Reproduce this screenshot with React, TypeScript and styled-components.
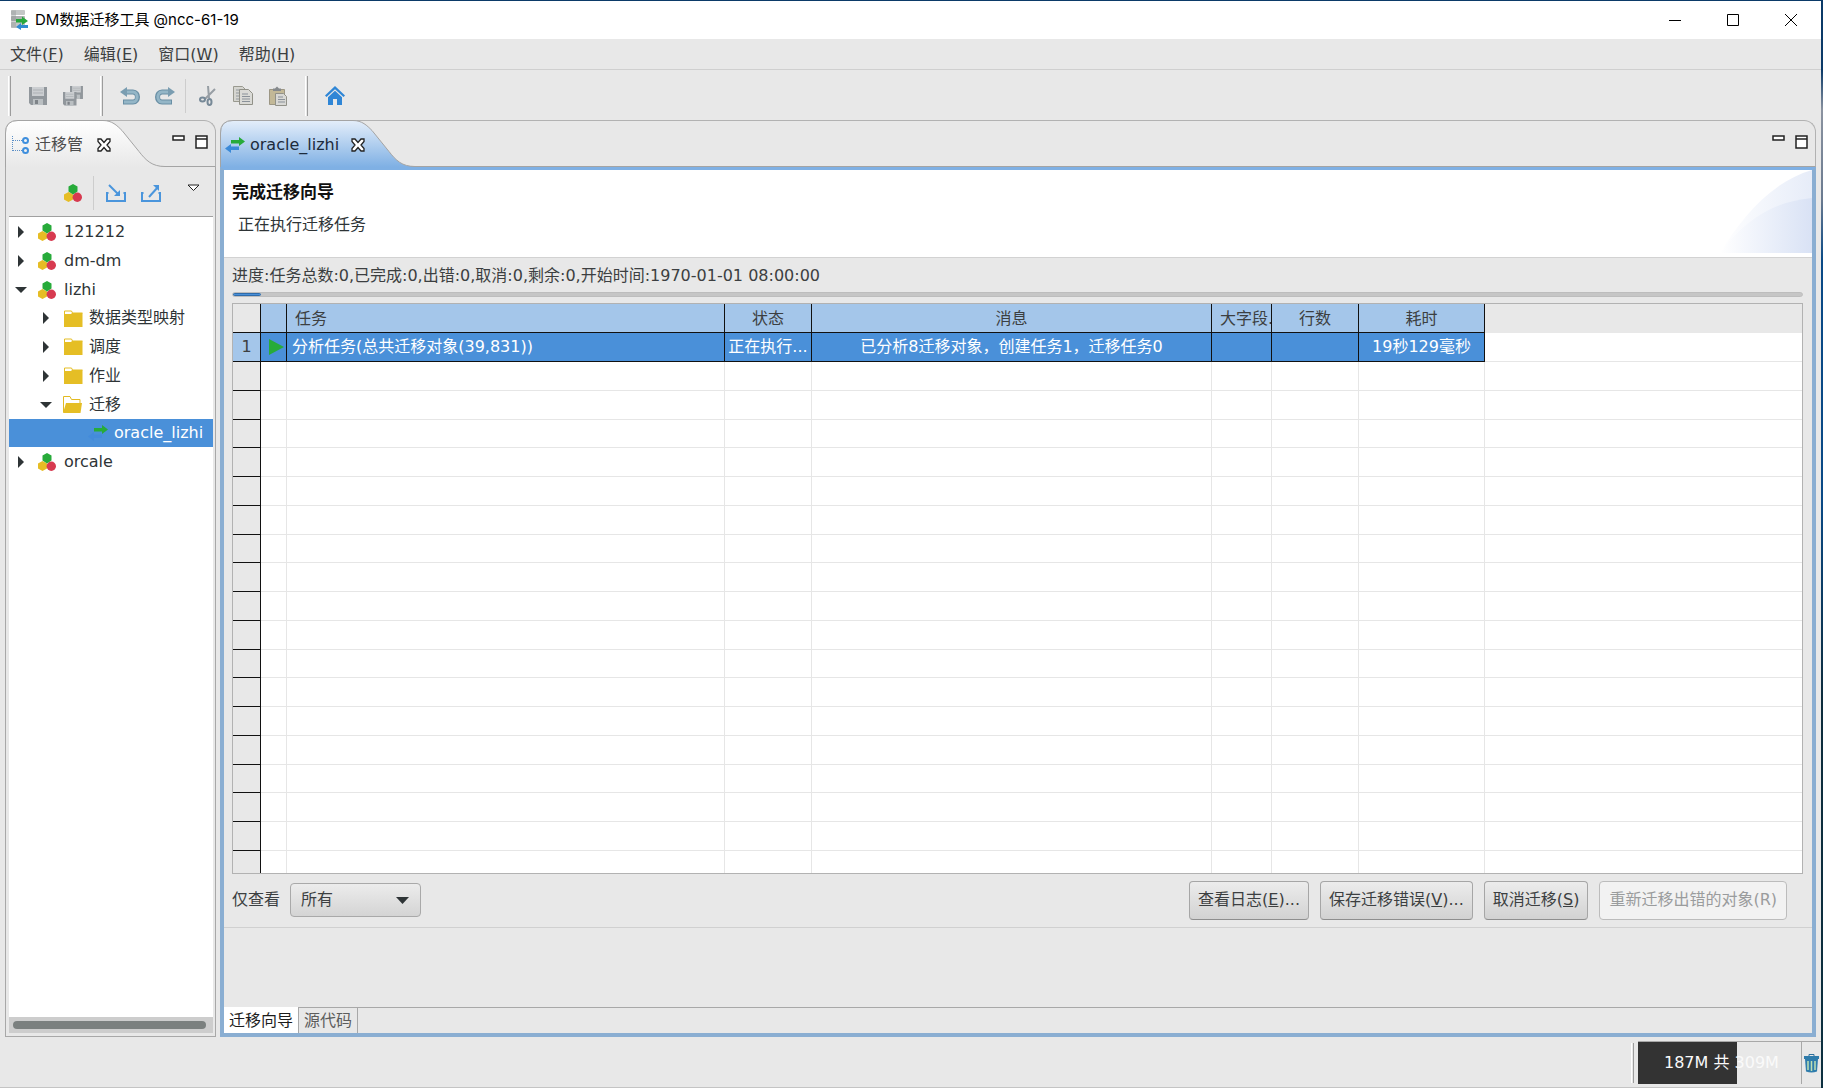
import React from 'react';
import styled, { createGlobalStyle, css } from 'styled-components';

const c = {
  face: '#e8e8e8',
  line: '#b2b2b2',
  text: '#3c3f41',
  accent: '#4a90d9',
  accentSoft: '#a4c6ea',
  frame: '#8aaed2',
  tabBlue: '#7fb0e4',
};

const uiFont = '"DejaVu Sans", "Noto Sans CJK SC", sans-serif';

const GlobalStyle = createGlobalStyle`
  * { box-sizing: border-box; }
  body { margin: 0; background: ${c.face}; }
  button, select { font: inherit; color: inherit; }
  ul { list-style: none; margin: 0; padding: 0; }
`;

/* ---------- window frame ---------- */

const Desktop = styled.div`
  display: flex;
  height: 100vh;
  padding: 1px 2px 0 0;
  background: linear-gradient(#0b3a68 0, #0b3a68 70px, #8b93a0 110px, #6a7a90 200px, #0a4a86 260px, #0a4a86 500px, #0d2c3c 700px, #0d3040 100%);
`;

const Window = styled.div`
  display: flex;
  flex-direction: column;
  flex: 1;
  min-width: 0;
  background: ${c.face};
  border-bottom: 1px solid #c4c4c4;
  font: 16px/24px ${uiFont};
  color: ${c.text};
`;

const TitleBar = styled.header`
  display: flex;
  align-items: center;
  height: 38px;
  padding-left: 10px;
  background: #fff;
  color: #000;
`;

const Title = styled.h1`
  flex: 1;
  margin: 0 0 0 7px;
  font: 400 15px/20px Inter, "Noto Sans CJK SC", sans-serif;
`;

const CaptionButton = styled.button`
  display: grid;
  place-items: center;
  width: 58px;
  height: 38px;
  padding: 0;
  border: 0;
  background: none;
`;

const CaptionGroup = styled.div`
  display: flex;
  padding-right: 1px;
`;

const MenuBar = styled.nav`
  display: flex;
  align-items: center;
  gap: 20px;
  height: 31px;
  padding: 2px 10px 0;
  border-bottom: 1px solid #cfcfcf;
`;

const MenuItem = styled.button`
  padding: 0;
  border: 0;
  background: none;
`;

const ToolBar = styled.div`
  display: flex;
  align-items: center;
  height: 50px;
  padding-top: 1px;
`;

const Handle = styled.span`
  width: 3px;
  height: 40px;
  margin: 0 9px 0 10px;
  border: solid #fff;
  border-width: 0 0 0 1px;
  border-right: 1px solid #9c9c9c;
  &:first-child { margin-left: 8px; }
`;

const Divider = styled.span`
  width: 1px;
  height: 34px;
  margin: 0 4px 0 3px;
  background: #cdcdcd;
`;

const IconButton = styled.button<{ $dim?: boolean }>`
  display: grid;
  place-items: center;
  width: 35px;
  height: 32px;
  padding: 0;
  border: 0;
  background: none;
  opacity: ${p => (p.$dim ? 0.85 : 1)};
`;

const Workbench = styled.main`
  display: grid;
  grid-template-columns: 211px minmax(0, 1fr);
  gap: 4px;
  flex: 1;
  min-height: 0;
  padding: 0 5px;
`;

/* ---------- tabbed parts ---------- */

const Part = styled.section`
  display: flex;
  flex-direction: column;
  min-width: 0;
  min-height: 0;
`;

const TabStrip = styled.div`
  display: flex;
  justify-content: space-between;
  height: 47px;
  flex: none;
  border: 1px solid ${c.line};
  border-bottom-color: #a4a4a4;
  border-radius: 12px 12px 0 0;
`;

const Tab = styled.div<{ $width: number; $pad: number }>`
  position: relative;
  display: flex;
  align-items: center;
  width: ${p => p.$width}px;
  height: 47px;
  margin: -1px 0 0 -1px;
  padding: 2px 0 0 ${p => p.$pad}px;
`;

const TabShape = styled.svg`
  position: absolute;
  left: 0;
  top: 0;
`;

const TabLabel = styled.span<{ $strong?: boolean }>`
  position: relative;
  margin: 0 ${p => (p.$strong ? 12 : 14)}px 0 ${p => (p.$strong ? 5 : 6)}px;
  color: ${p => (p.$strong ? '#1c2b3c' : '#4c4c4c')};
  white-space: nowrap;
`;

const TabIcon = styled.span`
  position: relative;
  display: flex;
`;

const TabClose = styled.button`
  position: relative;
  display: flex;
  padding: 0;
  border: 0;
  background: none;
`;

const PartControls = styled.div`
  display: flex;
  gap: 10px;
  padding: 14px 7px 0 0;
  align-items: flex-start;
`;

const PartButton = styled.button`
  display: flex;
  padding: 0;
  border: 0;
  background: none;
`;

const ViewBody = styled.div`
  display: flex;
  flex-direction: column;
  flex: 1;
  min-height: 0;
  padding: 0 2px 3px 3px;
  border: 1px solid #a8a8a8;
  border-top: 0;
`;

const ViewTools = styled.div`
  display: flex;
  align-items: center;
  height: 50px;
  flex: none;
  padding: 2px 0 0 46px;
  border-bottom: 1px solid #a0a0a0;
`;

const ViewMenu = styled.button`
  display: flex;
  align-self: flex-start;
  margin: 15px 0 0 19px;
  padding: 0;
  border: 0;
  background: none;
`;

const Tree = styled.ul`
  flex: 1;
  min-height: 0;
  overflow: hidden;
  background: #fff;
  color: #2e3436;
`;

const TreeRow = styled.li<{ $level: number; $selected?: boolean }>`
  display: flex;
  align-items: center;
  height: 29px;
  padding-left: ${p => 6 + p.$level * 25}px;
  white-space: nowrap;
  &:nth-child(4n) { height: 28px; }
  ${p => p.$selected && css`
    background: ${c.accent};
    color: #fff;
  `}
`;

const Twisty = styled.span`
  display: flex;
  width: 23px;
`;

const NodeIcon = styled.span`
  display: flex;
  width: 20px;
  margin-right: 6px;
`;

const ScrollTrack = styled.div`
  height: 16px;
  flex: none;
  padding: 4px 7px 4px 4px;
  background: #cdcdcd;
`;

const ScrollThumb = styled.div`
  height: 8px;
  border-radius: 4px;
  background: #7b807f;
`;

/* ---------- editor ---------- */

const EditorBody = styled.div`
  display: flex;
  flex-direction: column;
  flex: 1;
  min-height: 0;
  border: 4px solid ${c.frame};
  border-top: 3px solid ${c.tabBlue};
`;

const Banner = styled.div`
  display: flex;
  justify-content: space-between;
  height: 88px;
  flex: none;
  padding-left: 8px;
  background: #fff;
  border-bottom: 1px solid #d2d2d2;
`;

const BannerTitle = styled.h2`
  margin: 10px 0 9px;
  font: 700 17px/24px ${uiFont};
  color: #111;
`;

const BannerText = styled.p`
  margin: 0 0 0 6px;
  color: #2e3436;
`;

const Page = styled.div`
  display: flex;
  flex-direction: column;
  flex: 1;
  min-height: 0;
  padding: 6px 9px 0 8px;
`;

const ProgressText = styled.label`
  display: block;
`;

const Progress = styled.progress`
  appearance: none;
  display: block;
  width: 100%;
  height: 5px;
  margin: 4px 0 6px;
  border: 0;
  border-radius: 3px;
  overflow: hidden;
  &::-webkit-progress-bar { background: #c6c6c6; border: 1px solid #bdbdbd; border-radius: 3px; }
  &::-webkit-progress-value { background: ${c.accent}; border: 1px solid #2f6cab; border-radius: 3px; }
`;

const GridFrame = styled.div`
  flex: 1;
  min-height: 0;
  overflow: hidden;
  border: 1px solid ${c.line};
  background: #fff;
`;

const Grid = styled.table`
  width: 100%;
  table-layout: fixed;
  border-spacing: 0;
  tr { height: 29px; }
  tbody tr:nth-child(4n) { height: 28px; }
`;

const cellBase = css`
  padding: 0;
  overflow: hidden;
  white-space: nowrap;
  font-weight: 400;
  line-height: 24px;
`;

const HeadCell = styled.th<{ $left?: number; $plain?: boolean }>`
  ${cellBase}
  padding-top: 2px;
  border-right: 1px solid #111;
  border-bottom: 1px solid #111;
  background: ${p => (p.$plain ? c.face : c.accentSoft)};
  text-align: ${p => (p.$left ? 'left' : 'center')};
  padding-left: ${p => p.$left ?? 0}px;
`;

const HeadFill = styled.td`
  background: ${c.face};
`;

const RowHead = styled.th<{ $active?: boolean }>`
  ${cellBase}
  border-right: 1px solid #111;
  border-bottom: 1px solid #111;
  background: ${p => (p.$active ? c.accentSoft : c.face)};
`;

const Cell = styled.td<{ $active?: boolean; $left?: number }>`
  ${cellBase}
  border-right: 1px solid ${p => (p.$active ? '#111' : '#e6e6e6')};
  border-bottom: 1px solid ${p => (p.$active ? '#111' : '#e6e6e6')};
  background: ${p => (p.$active ? c.accent : '#fff')};
  color: #fff;
  text-align: ${p => (p.$left ? 'left' : 'center')};
  padding-left: ${p => p.$left ?? 0}px;
  svg { display: block; }
`;

const FillCell = styled.td`
  border-bottom: 1px solid #e6e6e6;
`;

const ActionBar = styled.div`
  display: flex;
  align-items: center;
  gap: 11px;
  height: 53px;
  flex: none;
  padding: 0 16px 1px 0;
`;

const FilterLabel = styled.label`
  margin-right: -1px;
`;

const SelectBox = styled.div`
  position: relative;
  margin-right: auto;
`;

const Select = styled.select`
  appearance: none;
  width: 131px;
  height: 34px;
  padding: 0 10px;
  border: 1px solid #a9a9a9;
  border-radius: 4px;
  background: linear-gradient(#ececec, #d4d4d4);
`;

const SelectArrow = styled.svg`
  position: absolute;
  right: 12px;
  top: 14px;
  pointer-events: none;
`;

const PushButton = styled.button`
  height: 39px;
  padding: 0 8px;
  border: 1px solid #a6a6a6;
  border-bottom-color: #8e8e8e;
  border-radius: 4px;
  background: linear-gradient(#ececec, #d2d2d2);
  white-space: nowrap;
  &:disabled {
    padding: 0 9px;
    border-color: #bcbcbc;
    background: #f2f2f2;
    color: #9a9c9d;
  }
`;

const Spare = styled.div`
  height: 80px;
  flex: none;
  border-top: 1px solid #d0d0d0;
`;

const PageTabs = styled.div`
  display: flex;
  height: 26px;
  flex: none;
  border-top: 1px solid #a8a8a8;
`;

const PageTab = styled.button<{ $active?: boolean }>`
  height: 26px;
  margin-top: -1px;
  padding: 1px 5px 0;
  border: 0;
  border-top: ${p => (p.$active ? '0' : '1px solid #a8a8a8')};
  border-right: 1px solid #a8a8a8;
  background: ${p => (p.$active ? '#fff' : 'none')};
  color: ${p => (p.$active ? '#1c1c1c' : '#5c5c5c')};
  line-height: 24px;
`;

/* ---------- status bar ---------- */

const StatusBar = styled.footer`
  display: flex;
  justify-content: flex-end;
  height: 50px;
  flex: none;
  padding-top: 4px;
`;

const StatusHandle = styled.span`
  width: 3px;
  height: 40px;
  margin: 2px 4px 0 0;
  border-left: 1px solid #fff;
  border-right: 1px solid #9c9c9c;
`;

const Heap = styled.div`
  display: grid;
  width: 164px;
  height: 43px;
  border-top: 1px solid #a8a8a8;
  border-right: 1px solid #a8a8a8;
`;

const HeapFill = styled.div`
  grid-area: 1 / 1;
  background: #333;
`;

const HeapText = styled.div`
  grid-area: 1 / 1;
  align-self: center;
  padding-left: 26px;
  color: #fafafa;
`;

const Trash = styled.button`
  display: grid;
  place-items: center;
  width: 19px;
  height: 43px;
  padding: 0;
  border: 0;
  border-top: 1px solid #a8a8a8;
  background: none;
`;

/* ---------- icons ---------- */

const AppIcon = () => (
  <svg width="18" height="20" viewBox="0 0 18 20">
    <rect x="1" y="0" width="14" height="5" rx="1" fill="#c3c6c6" />
    <rect x="1" y="6" width="14" height="5" rx="1" fill="#adb1b1" />
    <rect x="1" y="12" width="14" height="6" rx="1" fill="#c3c6c6" />
    <path d="M1 .5h5v17H1z" fill="#8f9494" opacity=".4" />
    <path d="M6 9h6V6.500l6 4.500-6 4V12.500H6z" fill="#27a83c" />
    <path d="M18 15h-7v-2l-5 4 5 3v-2h7z" fill="#2f8bd0" />
  </svg>
);

const SaveShape = ({ s = 1, x = 0, y = 0 }) => (
  <g transform={`translate(${x} ${y}) scale(${s})`}>
    <path d="M0 0h18v18H2l-2-2z" fill="#83898f" />
    <path d="M3 0h12v9H3z" fill="#c6cacd" />
    <path d="M4 3h10M4 6h10" stroke="#a4a9ad" />
    <path d="M4 12h10v6H4z" fill="#b3b8bc" />
    <path d="M6 13h3v4H6z" fill="#6c7278" />
  </g>
);

const SaveIcon = () => <svg width="18" height="18"><SaveShape /></svg>;
const SaveAllIcon = () => (
  <svg width="20" height="20"><SaveShape s={0.72} x={7} /><SaveShape s={0.75} y={6} /></svg>
);

const UndoIcon = ({ flip = false }) => (
  <svg width="20" height="18" viewBox="0 0 20 18">
    <g transform={flip ? 'translate(20 0) scale(-1 1)' : undefined}>
      <path d="M5 5h8c6 0 6 10 0 10H3" fill="none" stroke="#54809a" strokeWidth="5" />
      <path d="M5 5h8c5.500 0 5.500 10 0 10H4" fill="none" stroke="#86aec2" strokeWidth="3" />
      <path d="M0 5l7-5v10z" fill="#6791a8" />
    </g>
  </svg>
);

const CutIcon = () => (
  <svg width="17" height="20" viewBox="0 0 17 20" fill="none">
    <path d="M9 0l1 12M16 3L6 13" stroke="#8a9299" strokeWidth="2" />
    <ellipse cx="3.500" cy="13.500" rx="2.500" ry="2" stroke="#64798a" strokeWidth="2" />
    <ellipse cx="10.500" cy="16" rx="2" ry="3" stroke="#64798a" strokeWidth="2" />
  </svg>
);

const CopyIcon = () => (
  <svg width="20" height="20" viewBox="0 0 20 20">
    <path d="M.5.5h9l3 3v12H.5z" fill="#d2d2cc" stroke="#8c8c80" />
    <path d="M3 4h5M3 7h4M3 10h4M3 13h4" stroke="#858c93" />
    <path d="M6.500 3.500h9l4 4v11h-13z" fill="#d8d8d3" stroke="#838378" />
    <path d="M9 8h6M9 10.500h8M9 13h8M9 15.500h8" stroke="#7a838c" />
  </svg>
);

const PasteIcon = () => (
  <svg width="18" height="20" viewBox="0 0 18 20">
    <path d="M.5 3.500h15v15H.5z" fill="#bcb08a" stroke="#8f8873" />
    <path d="M4 5V2.500h2L8 .5l2 2h2V5z" fill="#74797d" />
    <path d="M6.500 7.500h8l3 3v9h-11z" fill="#d6d6d2" stroke="#838378" />
    <path d="M9 11h5M9 13.500h7M9 16h7" stroke="#7a838c" />
  </svg>
);

const HomeIcon = () => (
  <svg width="20" height="19" viewBox="0 0 20 19">
    <path d="M10 0l10 9.500-1.500 1.500L10 3.200 1.500 11 0 9.500z" fill="#2f86d6" />
    <path d="M10 4.700l7 6.500V19h-5v-6H8v6H3v-7.800z" fill="#2f86d6" />
  </svg>
);

const TrioIcon = () => (
  <svg width="18" height="18" viewBox="0 0 18 18">
    <path d="M4.500 8l4.500 2.500v5L4.500 18 0 15.500v-5z" fill="#e6bd25" />
    <circle cx="13.300" cy="13.300" r="4.700" fill="#d73a50" />
    <path d="M9 0l4.500 2.500v5L9 10.500 4.500 7.500v-5z" fill="#27ab3a" />
  </svg>
);

const ImportIcon = ({ out = false }) => (
  <svg width="20" height="18" viewBox="0 0 20 18" fill="none" stroke="#4a95dc" strokeWidth="2">
    <path d="M2.500 9H1v8h18V9h-1.500" />
    {out ? <path d="M8 13l9-10" /> : <path d="M3 1l10 10" />}
    {out ? <path d="M12 1h6v6z" fill="#4a95dc" stroke="none" /> : <path d="M14 6v6H8z" fill="#4a95dc" stroke="none" />}
  </svg>
);

const MenuTriangle = () => (
  <svg width="13" height="8"><path d="M1 1h11L6.500 6.500z" fill="#fff" stroke="#222" /></svg>
);

const MinIcon = () => (
  <svg width="13" height="6"><path d="M1 1h11v4H1z" fill="#fff" stroke="#222" strokeWidth="1.500" /></svg>
);

const MaxIcon = () => (
  <svg width="13" height="14">
    <path d="M1 1h11v12H1zM1 4h11" fill="#fff" stroke="#222" strokeWidth="1.500" />
  </svg>
);

const CloseIcon = () => (
  <svg width="14" height="14" viewBox="0 0 14 14">
    <path d="M1 1h3l3 3.500L10 1h3v2.500L10 7l3 3.500V13h-3L7 9.500 4 13H1v-2.500L4 7 1 3.500z" fill="#fff" stroke="#222" strokeWidth="1.300" />
  </svg>
);

const NavIcon = () => (
  <svg width="17" height="18" viewBox="0 0 17 18" fill="none">
    <path d="M.5 0v15M1 4.500h9M1 14.500h9" stroke="#5c8fc6" strokeDasharray="1 1" />
    <circle cx="13.500" cy="4.500" r="2.500" stroke="#3f8fdd" strokeWidth="2" />
    <circle cx="13.500" cy="14.500" r="2.500" stroke="#3f8fdd" strokeWidth="2" />
  </svg>
);

const SwapIcon = ({ back = '#3b8ad8' }) => (
  <svg width="20" height="16" viewBox="0 0 20 16">
    <path d="M6 3h8V0l6 4.500L14 9V6.500H6z" fill="#27ab3a" />
    <path d="M14 9.500H6V7l-6 4.500L6 16v-3h8z" fill={back} />
  </svg>
);

const FolderIcon = ({ open = false }) => (
  <svg width="20" height="17" viewBox="0 0 20 17">
    {open ? (
      <>
        <path d="M.5 16V.5H7l1.500 3H17V9" fill="#fff" stroke="#e2ba22" />
        <path d="M3 7h16l-1.500 10H0z" fill="#e5be25" />
      </>
    ) : (
      <>
        <path d="M1.500 5V1h7l1 2h10" fill="none" stroke="#e5be25" />
        <path d="M1 4h7l1-1h10.500v14H1z" fill="#e5be25" />
      </>
    )}
  </svg>
);

const Arrow = ({ open = false }) => (
  <svg width="13" height="12" viewBox="0 0 13 12">
    <path d={open ? 'M0 3h12L6 9z' : 'M3 0v12l6-6z'} fill="#2e3436" />
  </svg>
);

const TrashIcon = () => (
  <svg width="15" height="19" viewBox="0 0 15 19">
    <path d="M5 2V.5h5V2" fill="none" stroke="#2c6f9c" />
    <path d="M0 2h15v3H0z" fill="#2f7cab" />
    <path d="M1 5h13l-1 12.500q-5.500 2-11 0z" fill="#2f7cab" />
    <path d="M4 7v9M7.500 7v10M11 7v9" stroke="#bfe0b4" strokeWidth="1.500" />
  </svg>
);

/* ---------- pieces ---------- */

const Mnemonic = ({ label, k, tail = '' }: { label: string; k: string; tail?: string }) => (
  <>{label}(<u>{k}</u>){tail}</>
);

function TabBack({ id, width, stops }: { id: string; width: number; stops: [string, string] }) {
  const s = width - 62;
  const curve = `M.5 47V13Q.5 .5 13 .5H${s}c9 0 14 5 19 10l17 21c7 9 13 15 26 15`;
  return (
    <TabShape width={width} height="47" aria-hidden>
      <defs>
        <linearGradient id={id} x1="0" y1="0" x2="0" y2="1">
          <stop offset="0" stopColor={stops[0]} />
          <stop offset="1" stopColor={stops[1]} />
        </linearGradient>
      </defs>
      <path d={`${curve}V47z`} fill={`url(#${id})`} />
      <path d={curve} fill="none" stroke="#a4a4a4" />
    </TabShape>
  );
}

const Controls = () => (
  <PartControls>
    <PartButton aria-label="最小化"><MinIcon /></PartButton>
    <PartButton aria-label="最大化"><MaxIcon /></PartButton>
  </PartControls>
);

type Node = { level: number; kind: 'group' | 'folder' | 'job'; name: string; open?: boolean };

const nodes: Node[] = [
  { level: 0, kind: 'group', name: '121212' },
  { level: 0, kind: 'group', name: 'dm-dm' },
  { level: 0, kind: 'group', name: 'lizhi', open: true },
  { level: 1, kind: 'folder', name: '数据类型映射' },
  { level: 1, kind: 'folder', name: '调度' },
  { level: 1, kind: 'folder', name: '作业' },
  { level: 1, kind: 'folder', name: '迁移', open: true },
  { level: 2, kind: 'job', name: 'oracle_lizhi' },
  { level: 0, kind: 'group', name: 'orcale' },
];

const menus = [['文件', 'F'], ['编辑', 'E'], ['窗口', 'W'], ['帮助', 'H']];
const columnWidths = [28, 26, 438, 87, 400, 60, 87, 126];
const emptyRows = Array.from({ length: 40 }, (_, i) => i);
const heap = { used: 187, total: 309 };

function Navigator() {
  return (
    <Part>
      <TabStrip>
        <Tab $width={160} $pad={7}>
          <TabBack id="navTab" width={160} stops={['#ffffff', '#e8e8e8']} />
          <TabIcon><NavIcon /></TabIcon>
          <TabLabel>迁移管</TabLabel>
          <TabClose aria-label="关闭"><CloseIcon /></TabClose>
        </Tab>
        <Controls />
      </TabStrip>
      <ViewBody>
        <ViewTools>
          <IconButton aria-label="新建"><TrioIcon /></IconButton>
          <Divider />
          <IconButton aria-label="导入"><ImportIcon /></IconButton>
          <IconButton aria-label="导出"><ImportIcon out /></IconButton>
          <ViewMenu aria-label="视图菜单"><MenuTriangle /></ViewMenu>
        </ViewTools>
        <Tree>
          {nodes.map(n => (
            <TreeRow key={n.name} $level={n.level} $selected={n.kind === 'job'}>
              <Twisty>{n.kind !== 'job' && <Arrow open={n.open} />}</Twisty>
              <NodeIcon>
                {n.kind === 'group' && <TrioIcon />}
                {n.kind === 'folder' && <FolderIcon open={n.open} />}
                {n.kind === 'job' && <SwapIcon back="#438bdb" />}
              </NodeIcon>
              {n.name}
            </TreeRow>
          ))}
        </Tree>
        <ScrollTrack><ScrollThumb /></ScrollTrack>
      </ViewBody>
    </Part>
  );
}

function TaskGrid() {
  return (
    <GridFrame>
      <Grid>
        <colgroup>
          {columnWidths.map((w, i) => <col key={i} width={w} />)}
          <col />
        </colgroup>
        <thead>
          <tr>
            <HeadCell $plain />
            <HeadCell />
            <HeadCell $left={8}>任务</HeadCell>
            <HeadCell>状态</HeadCell>
            <HeadCell>消息</HeadCell>
            <HeadCell $left={8}>大字段.</HeadCell>
            <HeadCell>行数</HeadCell>
            <HeadCell>耗时</HeadCell>
            <HeadFill />
          </tr>
        </thead>
        <tbody>
          <tr>
            <RowHead $active>1</RowHead>
            <Cell $active $left={7}>
              <svg width="16" height="16"><path d="M1 0v16l15-8z" fill="#27ab3a" /></svg>
            </Cell>
            <Cell $active $left={5}>分析任务(总共迁移对象(39,831))</Cell>
            <Cell $active>正在执行...</Cell>
            <Cell $active>已分析8迁移对象，创建任务1，迁移任务0</Cell>
            <Cell $active />
            <Cell $active />
            <Cell $active>19秒129毫秒</Cell>
            <FillCell />
          </tr>
          {emptyRows.map(r => (
            <tr key={r}>
              <RowHead />
              {columnWidths.slice(1).map((_, i) => <Cell key={i} />)}
              <FillCell />
            </tr>
          ))}
        </tbody>
      </Grid>
    </GridFrame>
  );
}

function Editor() {
  return (
    <Part>
      <TabStrip>
        <Tab $width={195} $pad={5}>
          <TabBack id="editorTab" width={195} stops={['#e4eefa', '#7fb0e4']} />
          <TabIcon><SwapIcon /></TabIcon>
          <TabLabel $strong>oracle_lizhi</TabLabel>
          <TabClose aria-label="关闭"><CloseIcon /></TabClose>
        </Tab>
        <Controls />
      </TabStrip>
      <EditorBody>
        <Banner>
          <div>
            <BannerTitle>完成迁移向导</BannerTitle>
            <BannerText>正在执行迁移任务</BannerText>
          </div>
          <svg width="92" height="83" viewBox="0 0 92 83" aria-hidden>
            <defs>
              <linearGradient id="swoosh" x1="0" x2="1">
                <stop offset="0" stopColor="#fff" />
                <stop offset="1" stopColor="#d9e2f5" />
              </linearGradient>
            </defs>
            <path d="M0 83C20 50 50 12 92 0v83z" fill="url(#swoosh)" opacity=".65" />
            <path d="M0 83C24 52 50 32 92 28v55z" fill="url(#swoosh)" />
          </svg>
        </Banner>
        <Page>
          <ProgressText htmlFor="progress">
            进度:任务总数:0,已完成:0,出错:0,取消:0,剩余:0,开始时间:1970-01-01 08:00:00
          </ProgressText>
          <Progress id="progress" max={1000} value={18} />
          <TaskGrid />
          <ActionBar>
            <FilterLabel htmlFor="filter">仅查看</FilterLabel>
            <SelectBox>
              <Select id="filter" defaultValue="all"><option value="all">所有</option></Select>
              <SelectArrow width="13" height="7"><path d="M0 0h13L6.500 7z" fill="#2e3436" /></SelectArrow>
            </SelectBox>
            <PushButton><Mnemonic label="查看日志" k="E" tail="..." /></PushButton>
            <PushButton><Mnemonic label="保存迁移错误" k="V" tail="..." /></PushButton>
            <PushButton><Mnemonic label="取消迁移" k="S" /></PushButton>
            <PushButton disabled>重新迁移出错的对象(R)</PushButton>
          </ActionBar>
        </Page>
        <Spare />
        <PageTabs>
          <PageTab $active>迁移向导</PageTab>
          <PageTab>源代码</PageTab>
        </PageTabs>
      </EditorBody>
    </Part>
  );
}

export default function App() {
  return (
    <Desktop>
      <GlobalStyle />
      <Window>
        <TitleBar>
          <AppIcon />
          <Title>DM数据迁移工具 @ncc-61-19</Title>
          <CaptionGroup>
            <CaptionButton aria-label="最小化">
              <svg width="12" height="12"><path d="M0 6.500h12" stroke="#000" /></svg>
            </CaptionButton>
            <CaptionButton aria-label="最大化">
              <svg width="12" height="12"><path d="M.5.5h11v11H.5z" fill="none" stroke="#000" /></svg>
            </CaptionButton>
            <CaptionButton aria-label="关闭">
              <svg width="12" height="12"><path d="M0 0l12 12M12 0L0 12" stroke="#000" /></svg>
            </CaptionButton>
          </CaptionGroup>
        </TitleBar>
        <MenuBar>
          {menus.map(([label, k]) => (
            <MenuItem key={k}><Mnemonic label={label} k={k} /></MenuItem>
          ))}
        </MenuBar>
        <ToolBar>
          <Handle />
          <IconButton $dim aria-label="保存"><SaveIcon /></IconButton>
          <IconButton $dim aria-label="全部保存"><SaveAllIcon /></IconButton>
          <Handle />
          <IconButton $dim aria-label="撤销"><UndoIcon /></IconButton>
          <IconButton $dim aria-label="重做"><UndoIcon flip /></IconButton>
          <Divider />
          <IconButton $dim aria-label="剪切"><CutIcon /></IconButton>
          <IconButton $dim aria-label="复制"><CopyIcon /></IconButton>
          <IconButton $dim aria-label="粘贴"><PasteIcon /></IconButton>
          <Handle />
          <IconButton aria-label="主页"><HomeIcon /></IconButton>
        </ToolBar>
        <Workbench>
          <Navigator />
          <Editor />
        </Workbench>
        <StatusBar>
          <StatusHandle />
          <Heap>
            <HeapFill style={{ width: `${(heap.used / heap.total) * 100}%` }} />
            <HeapText>{heap.used}M 共 {heap.total}M</HeapText>
          </Heap>
          <Trash aria-label="回收"><TrashIcon /></Trash>
        </StatusBar>
      </Window>
    </Desktop>
  );
}
